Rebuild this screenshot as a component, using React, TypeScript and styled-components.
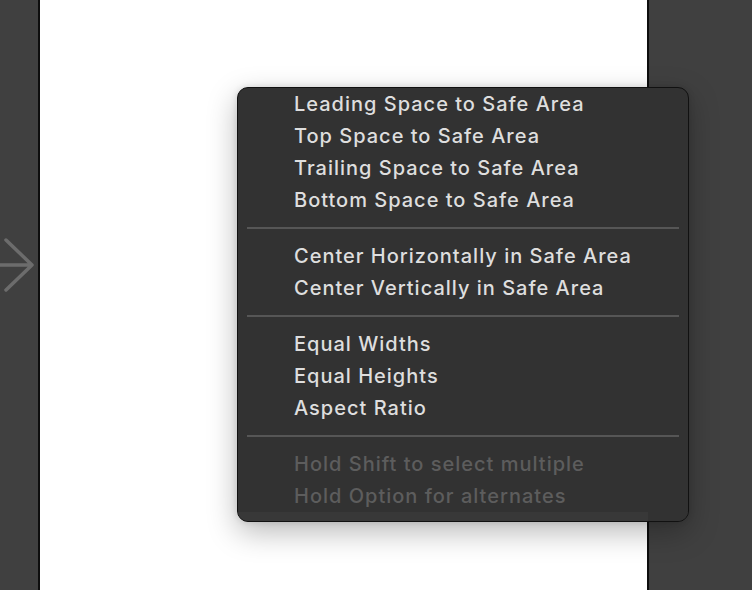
import React from "react";
import styled, { createGlobalStyle } from "styled-components";

const GlobalStyle = createGlobalStyle`
  html, body {
    margin: 0;
    padding: 0;
    background: #404040;
  }
  body {
    font-family: Inter, "Noto Sans", "Liberation Sans", sans-serif;
    -webkit-font-smoothing: antialiased;
  }
`;

const Workspace = styled.div`
  position: relative;
  width: 752px;
  height: 590px;
  display: flex;
  overflow: hidden;
  background: #404040;
`;

const Gutter = styled.div`
  width: 38px;
  display: flex;
  align-items: center;
  padding-bottom: 60px;
  box-sizing: border-box;
`;

const Canvas = styled.div`
  width: 607px;
  height: 100%;
  background: #ffffff;
  border-left: 2px solid #0e0e0e;
  border-right: 2px solid #0e0e0e;
`;

const Filler = styled.div`
  flex: 1;
  background: #404040;
`;

const Menu = styled.div`
  position: absolute;
  left: 237px;
  top: 87px;
  width: 452px;
  box-sizing: border-box;
  background: #323232;
  border: 1px solid #111;
  border-radius: 11px;
  overflow: hidden;
  box-shadow: 0 10px 30px rgba(0, 0, 0, 0.28), 0 0 6px rgba(0, 0, 0, 0.12);
  display: flex;
  flex-direction: column;
`;

const Item = styled.div<{ $disabled?: boolean }>`
  height: 32px;
  display: flex;
  align-items: center;
  padding-left: 56px;
  font-size: 20px;
  font-weight: 450;
  letter-spacing: 1px;
  color: ${(p) => (p.$disabled ? "#5d5d5d" : "#dedede")};
  white-space: nowrap;
`;

const Separator = styled.div`
  height: 24px;
  display: flex;
  align-items: center;
  padding: 0 9px 0 9px;

  &::after {
    content: "";
    flex: 1;
    height: 2px;
    background: #565656;
  }
`;

const Footer = styled.div`
  height: 9px;
  background: linear-gradient(to right, #383838 0, #383838 410px, #323232 410px);
`;

const groups = [
  [
    "Leading Space to Safe Area",
    "Top Space to Safe Area",
    "Trailing Space to Safe Area",
    "Bottom Space to Safe Area",
  ],
  ["Center Horizontally in Safe Area", "Center Vertically in Safe Area"],
  ["Equal Widths", "Equal Heights", "Aspect Ratio"],
];

const hints = ["Hold Shift to select multiple", "Hold Option for alternates"];

const Arrow = () => (
  <svg width="38" height="60" viewBox="0 0 38 60">
    <path
      d="M0 30 H32 M6 5 L32 30 L6 55"
      fill="none"
      stroke="#6c6c6c"
      strokeWidth="3.5"
      strokeLinecap="round"
      strokeLinejoin="round"
    />
  </svg>
);

export default function App() {
  return (
    <Workspace>
      <GlobalStyle />
      <Gutter>
        <Arrow />
      </Gutter>
      <Canvas />
      <Filler />
      <Menu>
        {groups.map((group, i) => (
          <React.Fragment key={i}>
            {group.map((label) => (
              <Item key={label}>{label}</Item>
            ))}
            <Separator />
          </React.Fragment>
        ))}
        {hints.map((label) => (
          <Item key={label} $disabled>
            {label}
          </Item>
        ))}
        <Footer />
      </Menu>
    </Workspace>
  );
}
